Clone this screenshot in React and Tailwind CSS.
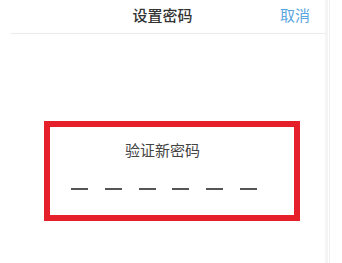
export default function App() {
  const dashes = [0, 1, 2, 3, 4, 5];
  return (
    <div
      className="w-[342px] h-[263px] bg-white flex overflow-hidden"
      style={{ fontFamily: '"Noto Sans CJK SC", "Noto Sans", sans-serif' }}
    >
      <div className="w-[325px] flex flex-col">
        <div className="h-[34px] relative flex items-center justify-center ml-[10px] border-b border-[#ececec]">
          <span className="text-[15px] leading-[20px] text-[#333] font-medium -ml-[10px] -mt-[4px]">设置密码</span>
          <span className="absolute right-[15px] top-[5px] text-[15px] leading-[20px] text-[#5aa6e0]">取消</span>
        </div>
        <div className="mt-[87px] ml-[44px] w-[256px] h-[100px] border-[6px] border-[#e5202a] flex flex-col">
          <div className="pt-[13px] pl-[75px] text-[15px] leading-[20px] text-[#444]">验证新密码</div>
          <div className="mt-[28px] pl-[21px] flex gap-[16.8px]">
            {dashes.map((d) => (
              <div key={d} className="w-[17px] h-[2px] bg-[#555]" />
            ))}
          </div>
        </div>
      </div>
      <div className="w-[17px] flex">
        <div className="w-[3px] h-full bg-[#f4f4f4]" />
        <div className="w-[1px] ml-[1px] h-full bg-[#f0f0f0]" />
      </div>
    </div>
  );
}
